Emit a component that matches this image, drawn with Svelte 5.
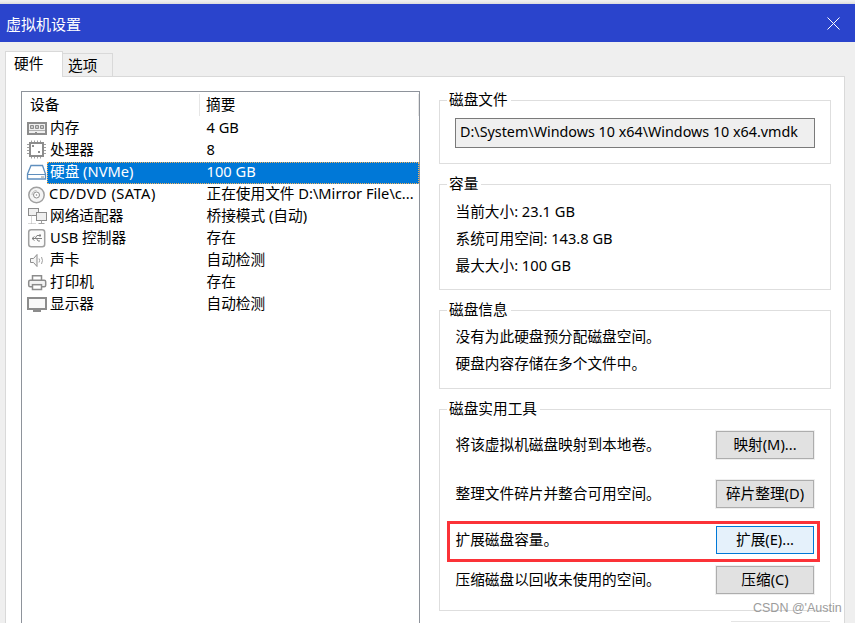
<script>
  const rows = [
    { icon: 'mem', name: '内存', value: '4 GB' },
    { icon: 'cpu', name: '处理器', value: '8' },
    { icon: 'disk', name: '硬盘 (NVMe)', value: '100 GB', selected: true },
    { icon: 'cd', name: 'CD/DVD (SATA)', value: '正在使用文件 D:\\Mirror File\\c...', wide: true },
    { icon: 'net', name: '网络适配器', value: '桥接模式 (自动)' },
    { icon: 'usb', name: 'USB 控制器', value: '存在' },
    { icon: 'snd', name: '声卡', value: '自动检测' },
    { icon: 'prn', name: '打印机', value: '存在' },
    { icon: 'mon', name: '显示器', value: '自动检测' }
  ];
</script>

{#snippet icon(k)}
  <svg class="ico" width="22" height="22" viewBox="0 0 22 22" fill="none" stroke="#8c8c8c" stroke-width="1">
    {#if k === 'mem'}
      <rect x="3" y="5" width="18" height="11" fill="#efefef" stroke-width="2" />
      <path d="M5.500 7.500h3v3h-3zM10.500 7.500h3v3h-3zM15.500 7.500h3v3h-3z" fill="#c8c8c8" />
      <path d="M4 12.500h16" stroke="#b0b0b0" />
      <path d="M10 14h2v2h-2z" fill="#8c8c8c" stroke="none" />
    {:else if k === 'cpu'}
      <rect x="5" y="3" width="13" height="13" fill="#fff" stroke-width="2" />
      <path d="M6.500.500v1.500M9.500.500v1.500M12.500.500v1.500M15.500.500v1.500M6.500 17v1.500M9.500 17v1.500M12.500 17v1.500M15.500 17v1.500M2 4.500h2M2 7.500h2M2 10.500h2M2 13.500h2M19 4.500h2M19 7.500h2M19 10.500h2M19 13.500h2" stroke="#a0a0a0" />
      <path d="M7 5h2v2H7zM13 11h2v2h-2z" fill="#8c8c8c" stroke="none" />
    {:else if k === 'disk'}
      <path d="M6 3.500h11.500l3 8.500v5H2.500v-5z" fill="#fff" stroke="#5f8fbe" stroke-width="1.300" />
      <path d="M3 12.500h17" stroke="#5f8fbe" />
      <path d="M16 15h3" stroke="#8c8c8c" />
    {:else if k === 'cd'}
      <circle cx="11.500" cy="11" r="7.700" stroke="#a0a0a0" stroke-width="1.500" fill="#f4f4f4" />
      <circle cx="11.500" cy="11" r="3" stroke="#8c8c8c" fill="#fff" />
      <circle cx="11.500" cy="11" r=".8" fill="#8c8c8c" stroke="none" />
      <path d="M7 11a4.500 4.500 0 0 1 4.500-4.500" stroke="#bdbdbd" />
    {:else if k === 'net'}
      <rect x="3.500" y="2.500" width="10" height="7" fill="#efefef" />
      <rect x="11.500" y="6.500" width="10" height="8" fill="#efefef" />
      <path d="M16.500 14.500v3M13.500 17.500h6" stroke="#a0a0a0" />
      <path d="M6.500 9.500v8.500M3.500 17.500h7" stroke="#b0b0b0" stroke-dasharray="1 1" />
    {:else if k === 'usb'}
      <rect x="3.700" y="1.700" width="16" height="17" rx="2.500" stroke="#a0a0a0" stroke-width="1.500" fill="#fbfbfb" />
      <path d="M7 10.500h10M7 10.500l2.500-2M7 10.500l2.500 2M10 10.500l2-3h2.500M11.500 10.500l1.500 2.500h2" stroke="#808080" />
      <rect x="14" y="6.500" width="2" height="2" fill="#808080" stroke="none" />
    {:else if k === 'snd'}
      <path d="M5.500 8.500h3l3.500-4v12l-3.500-4h-3z" fill="#f4f4f4" />
      <path d="M14 8.500q1.300 2 0 4M16.500 7q2 3.500 0 7" stroke="#a0a0a0" />
    {:else if k === 'prn'}
      <path d="M7.500 8V3.700h9V8" fill="#fff" stroke-width="1.500" />
      <rect x="3.700" y="8.200" width="17" height="6.500" rx="1.500" fill="#f2f2f2" stroke-width="1.500" />
      <rect x="7.500" y="12.700" width="9" height="4.800" fill="#fff" stroke-width="1.500" />
    {:else if k === 'mon'}
      <rect x="3" y="4" width="18" height="11" fill="#f8f8f8" stroke-width="2" />
      <path d="M8 17h8" stroke-width="2" />
    {/if}
  </svg>
{/snippet}

<div class="window">
  <header class="title">
    <span>虚拟机设置</span>
    <svg width="13" height="13" viewBox="0 0 13 13" stroke="#fff" stroke-width="1"><path d="M.5.500l12 12M12.500.500l-12 12" /></svg>
  </header>

  <div class="tabs">
    <div class="tab active">硬件</div>
    <div class="tab">选项</div>
  </div>

  <main class="pane">
    <section class="list">
      <div class="head">
        <div class="col1">设备</div>
        <div class="col2">摘要</div>
      </div>
      {#each rows as r}
        <div class="row">
          {@render icon(r.icon)}
          <div class="cells" class:sel={r.selected}>
            <div class="name" class:wide={r.wide}>{r.name}</div>
            <div class="val">{r.value}</div>
          </div>
        </div>
      {/each}
    </section>

    <div class="side">
      <fieldset class="file">
        <legend>磁盘文件</legend>
        <div class="path">D:\System\Windows 10 x64\Windows 10 x64.vmdk</div>
      </fieldset>

      <fieldset class="cap">
        <legend>容量</legend>
        <p>当前大小: 23.1 GB</p>
        <p>系统可用空间: 143.8 GB</p>
        <p>最大大小: 100 GB</p>
      </fieldset>

      <fieldset class="info">
        <legend>磁盘信息</legend>
        <p>没有为此硬盘预分配磁盘空间。</p>
        <p>硬盘内容存储在多个文件中。</p>
      </fieldset>

      <fieldset class="tools">
        <legend>磁盘实用工具</legend>
        <div class="tool t1"><span>将该虚拟机磁盘映射到本地卷。</span><button>映射(M)...</button></div>
        <div class="tool t2"><span>整理文件碎片并整合可用空间。</span><button>碎片整理(D)</button></div>
        <div class="tool t3"><span>扩展磁盘容量。</span><button class="hot">扩展(E)...</button></div>
        <div class="tool t4"><span>压缩磁盘以回收未使用的空间。</span><button>压缩(C)</button></div>
      </fieldset>
      <div class="next"></div>
    </div>
  </main>
  <div class="mark">CSDN @'Austin</div>
</div>

<style>
  :global(body) { margin: 0; background: #efefef; overflow: hidden; }
  .window {
    position: relative;
    width: 855px; height: 623px; overflow: hidden; box-sizing: border-box;
    padding-top: 4px; background: linear-gradient(#efefef 0, #efefef 1px, #dcdcdc 4px, #efefef 4px);
    font-family: "Noto Sans", "Noto Sans CJK SC", sans-serif;
    font-size: 14.67px; color: #000;
  }
  .title {
    height: 38px; background: #2a44cc; color: #fff;
    display: flex; align-items: center; justify-content: space-between;
    padding: 0 15px 0 6px; font-size: 15px;
  }
  .tabs { display: flex; align-items: flex-end; height: 34px; padding-left: 5px; box-sizing: border-box; }
  .tab {
    width: 51px; height: 23px; box-sizing: border-box; padding-left: 5px; line-height: 22px;
    border: 1px solid #d9d9d9; border-bottom: 0; margin-left: -1px;
  }
  .tab.active {
    width: 58px; height: 26px; background: #fff; line-height: 23px; z-index: 1; margin: 0 0 -1px; padding-left: 8px;
  }
  .pane {
    width: 840px; height: 600px; box-sizing: border-box; margin-left: 5px;
    background: #fff; border: 1px solid #d9d9d9;
    display: flex; align-items: flex-start; padding: 14px 0 0 15px;
  }
  .list {
    width: 399px; height: 600px; box-sizing: border-box; flex: none;
    border: 1px solid #8e939b; background: #fff; padding: 2px 0 0 1px;
  }
  .head { display: flex; height: 24px; line-height: 21px; }
  .col1, .col2 { box-sizing: border-box; height: 22px; border-right: 1px solid #e6e6e6; }
  .col1 { width: 177px; padding-left: 7px; }
  .col2 { width: 219px; padding-left: 6px; }
  .row { display: flex; height: 22px; }
  .ico { flex: none; margin-left: 2px; }
  .cells { flex: 1; display: flex; height: 22px; line-height: 19px; white-space: nowrap; }
  .name { flex: none; width: 159.500px; padding-left: 3px; box-sizing: border-box; }
  .name.wide { letter-spacing: .45px; padding-left: 2px; }
  .val { flex: 1; }
  .cells.sel { background: #0078d7; color: #fff; outline: 1px dotted #f5b25a; outline-offset: -1px; }
  .side { margin-left: 19px; width: 392px; flex: none; display: flex; flex-direction: column; gap: 20px; margin-top: 9px; }
  fieldset {
    margin: 0; box-sizing: border-box; position: relative;
    border: 1px solid #dedede; padding: 0 0 0 15.500px;
  }
  legend { position: absolute; left: 7px; top: -12px; line-height: 20px; background: #fff; padding: 0 3px 0 2px; }
  p { margin: 0; line-height: 27px; }
  .file { height: 64px; padding: 17px 15px 0 15px; }
  .path {
    width: 360px; height: 30px; box-sizing: border-box; border: 1px solid #7a7a7a; background: #efefef;
    line-height: 25px; padding-left: 4px; font-size: 14.33px; white-space: nowrap;
  }
  .cap { height: 106px; padding-top: 13px; }
  .info { height: 79px; padding-top: 12px; }
  .tools { height: 202px; padding: 21px 16px 0 15.500px; }
  .tool { display: flex; align-items: center; justify-content: space-between; }
  .tool span { padding-bottom: 4px; }
  .t2 { margin-top: 21px; }
  .t3 { margin-top: 18px; position: relative; }
  .t4 { margin-top: 12px; }
  button {
    width: 98px; height: 28px; box-sizing: border-box; padding: 0 0 3px; margin: 0; font: inherit; color: #000;
    background: #e1e1e1; border: 1px solid #adadad; box-shadow: 0 0 0 1px #efefef;
  }
  button.hot { background: #e5f1fb; border-color: #0078d7; box-shadow: none; }
  .t3::before {
    content: ""; position: absolute; left: -9px; right: -6px; top: -5px; bottom: -8px;
    border: 3px solid #fb3238; pointer-events: none;
  }
  .next { margin: -10px 0 0 292px; width: 99px; border-top: 1px solid #e4e4e4; }
  .mark { position: absolute; left: 753px; top: 601px; font-size: 12.5px; font-family: "Liberation Sans", sans-serif; color: #9c9c9c; }
</style>
